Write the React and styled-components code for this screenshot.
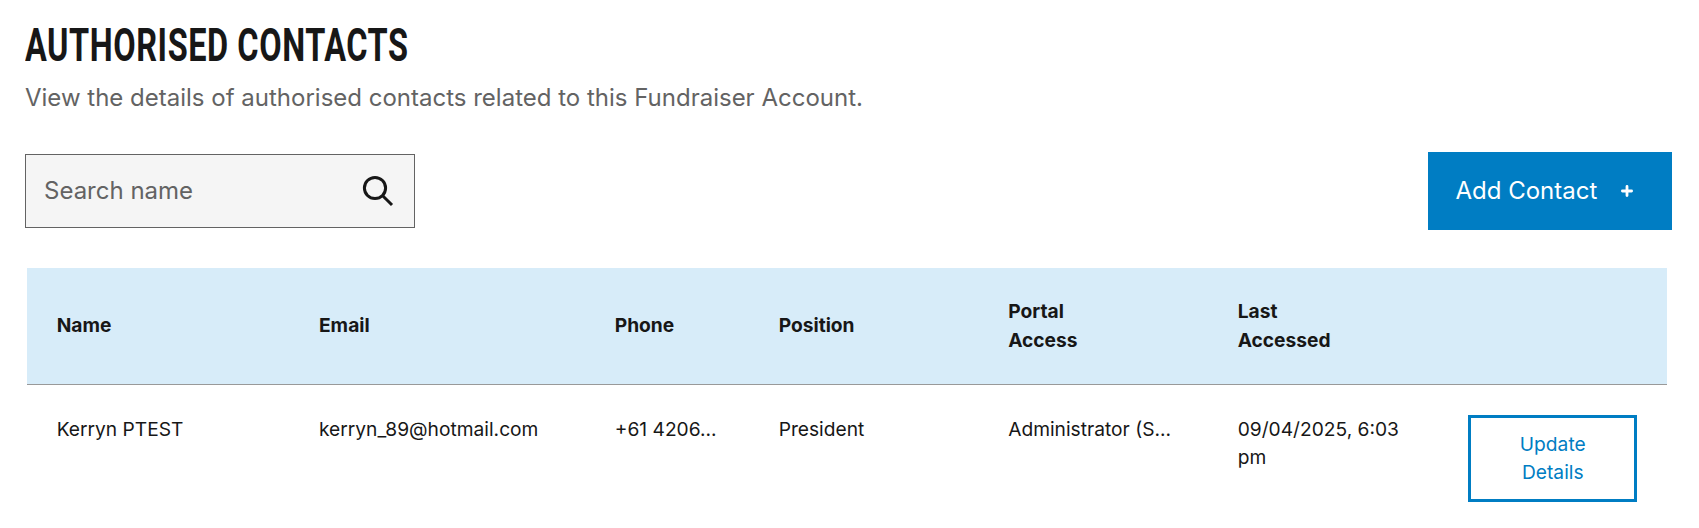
import React, { useState } from 'react'
import styled, { createGlobalStyle } from 'styled-components'

const columns = ['Name', 'Email', 'Phone', 'Position', 'Portal Access', 'Last Accessed', '']

const contacts = [
  {
    name: 'Kerryn PTEST',
    email: 'kerryn_89@hotmail.com',
    phone: '+61 4206...',
    position: 'President',
    access: 'Administrator (S...',
    lastAccessed: '09/04/2025, 6:03 pm'
  }
]

export default function App() {
  const [search, setSearch] = useState('')
  const visible = contacts.filter(contact => contact.name.toLowerCase().includes(search.toLowerCase()))

  return (
    <Page>
      <GlobalStyle />
      <Title>AUTHORISED CONTACTS</Title>
      <Subtitle>View the details of authorised contacts related to this Fundraiser Account.</Subtitle>

      <Toolbar>
        <SearchBox>
          <SearchInput placeholder="Search name" value={search} onChange={e => setSearch(e.target.value)} />
          <svg width="32" height="32" viewBox="0 0 32 32" fill="none" stroke="#171717" strokeWidth="3">
            <circle cx="13" cy="13" r="10.6" />
            <path d="M20.7 20.7L30 30" />
          </svg>
        </SearchBox>
        <AddButton>
          Add Contact
          <svg width="12" height="12" viewBox="0 0 12 12" stroke="#fff" strokeWidth="2.8" strokeLinecap="round">
            <path d="M6 1.4V10.6M1.4 6H10.6" />
          </svg>
        </AddButton>
      </Toolbar>

      <Table>
        <HeaderRow>
          {columns.map(column => <HeaderCell key={column}><span>{column}</span></HeaderCell>)}
        </HeaderRow>
        {visible.map(contact => (
          <Row key={contact.email}>
            <Cell>{contact.name}</Cell>
            <Cell>{contact.email}</Cell>
            <Cell $nowrap>{contact.phone}</Cell>
            <Cell>{contact.position}</Cell>
            <Cell $nowrap>{contact.access}</Cell>
            <Cell>{contact.lastAccessed}</Cell>
            <Cell><UpdateButton>Update Details</UpdateButton></Cell>
          </Row>
        ))}
      </Table>
    </Page>
  )
}

const GlobalStyle = createGlobalStyle`
  * {
    box-sizing: border-box;
  }

  body {
    margin: 0;
    background: #fff;
    color: #171717;
    font-family: Inter, sans-serif;
  }
`

const Page = styled.div`
  padding: 20px 27px 0 25px;
`

const Title = styled.h1`
  margin: 0;
  width: max-content;
  font-family: Roboto, sans-serif;
  font-size: 46px;
  font-weight: 700;
  line-height: 50px;
  letter-spacing: 0.8px;
  transform: scaleX(0.706);
  transform-origin: left;
`

const Subtitle = styled.p`
  margin: 10px 0 0;
  color: #636363;
  font-size: 24px;
  line-height: 36px;
`

const Toolbar = styled.div`
  display: flex;
  align-items: center;
  justify-content: space-between;
  margin-top: 36px;
`

const SearchBox = styled.div`
  display: flex;
  align-items: center;
  width: 390px;
  height: 74px;
  padding: 0 20px 0 18px;
  border: 1px solid #636363;
  background: #f5f5f5;

  svg {
    flex: none;
  }
`

const SearchInput = styled.input`
  flex: 1;
  min-width: 0;
  padding: 0 0 2px;
  border: 0;
  outline: 0;
  background: transparent;
  color: #171717;
  font-family: inherit;
  font-size: 24px;

  &::placeholder {
    color: #636363;
    opacity: 1;
  }
`

const AddButton = styled.button`
  display: flex;
  align-items: center;
  gap: 24px;
  width: 244px;
  height: 78px;
  padding: 0 0 2px 27.5px;
  border: 0;
  background: #007dc3;
  color: #fff;
  font-family: inherit;
  font-size: 24px;
  cursor: pointer;

  svg {
    margin-top: 1px;
  }
`

const Table = styled.div`
  width: 1640px;
  margin: 38px 0 0 1.7px;
  font-size: 19.2px;
  line-height: 28.8px;
`

const Row = styled.div`
  display: grid;
  grid-template-columns: 16fr 18.04fr 10fr 14fr 14fr 14fr 14fr;
`

const HeaderRow = styled(Row)`
  height: 117px;
  border-bottom: 1px solid #999;
  background: #d7ecf9;
`

const HeaderCell = styled.div`
  display: flex;
  align-items: center;
  padding: 0 30px 0.6px;
  font-weight: 700;

  span {
    width: min-content;
  }
`

const Cell = styled.div`
  min-width: 0;
  padding: 30px 28px 30px 30px;
  line-height: 28px;
  white-space: ${({ $nowrap }) => $nowrap ? 'nowrap' : 'normal'};
`

const UpdateButton = styled.button`
  width: 169px;
  height: 87px;
  margin-left: 0.6px;
  padding: 11px 29px 13px 30px;
  border: 3px solid #007dc3;
  background: #fff;
  color: #007dc3;
  font: inherit;
  cursor: pointer;
`
